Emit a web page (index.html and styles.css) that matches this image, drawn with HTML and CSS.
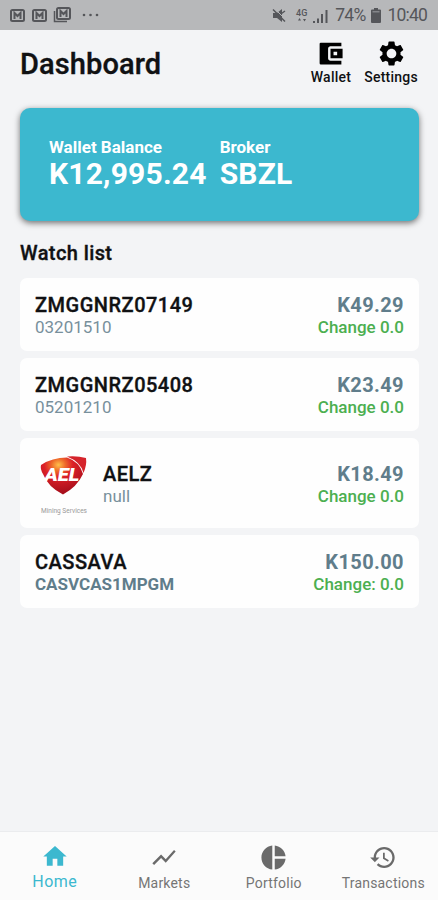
FILE: index.html
```html
<!DOCTYPE html>
<html lang="en">
<head>
    <meta charset="UTF-8">
    <meta name="viewport" content="width=device-width, initial-scale=1.0">
    <title>Dashboard</title>
    <link rel="stylesheet" href="styles.css">
</head>
<body>
    <div class="status-bar">
        <div class="status-left">
            <svg class="mail" width="15" height="13" viewBox="0 0 15 13"><rect x="1" y="1" width="13" height="11" rx="1.5"/><path d="M4.500 10V4l3 3 3-3v6"/></svg>
            <svg class="mail" width="15" height="13" viewBox="0 0 15 13"><rect x="1" y="1" width="13" height="11" rx="1.5"/><path d="M4.500 10V4l3 3 3-3v6"/></svg>
            <svg class="mail mail-stack" width="18" height="16" viewBox="0 0 18 16"><path class="thin" d="M1.500 4v10.500H14"/><rect x="4" y="1" width="13" height="11" rx="1.5"/><path d="M7.500 10V4l3 3 3-3v6"/></svg>
            <svg class="dots" width="17" height="4" viewBox="0 0 17 4"><circle cx="2" cy="2" r="1.3"/><circle cx="8.5" cy="2" r="1.3"/><circle cx="15" cy="2" r="1.3"/></svg>
        </div>
        <div class="status-right">
            <svg class="mute" width="15" height="15" viewBox="0 0 15 15"><path d="M1 5h4l5-4v13l-5-4H1z"/><path class="gap" d="M2 0l13 13"/><path class="slash" d="M1 1.500l12 12M9.500 5.500L13 3"/></svg>
            <div class="network"><span>4G</span><svg width="8" height="4" viewBox="0 0 8 4"><path d="M0 2.500h3L1.500 0zM5 1h3L6.500 3.500z"/></svg></div>
            <svg class="signal" width="15" height="14" viewBox="0 0 15 14"><path d="M0 12h2v2H0zM4 9.500h2V14H4zM8 5h2v9H8zM12.500 1h2v13h-2z"/></svg>
            <span class="percent">74%</span>
            <svg class="battery" width="10" height="15" viewBox="0 0 10 15"><path d="M3 0h4v1.500h2q1 0 1 1V14q0 1-1 1H1q-1 0-1-1V2.500q0-1 1-1h2z"/><path class="level" d="M1.500 3h7v1.500h-7z"/></svg>
            <span class="clock">10:40</span>
        </div>
    </div>

    <div class="header">
        <h1>Dashboard</h1>
        <div class="actions">
            <div class="action">
                <svg width="29" height="29" viewBox="0 0 24 24"><path fill-rule="evenodd" d="M21 18v3H4q-1 0-1-1V4q0-1 1-1h17v3h-9c-1.110 0-2 .9-2 2v8c0 1.100.89 2 2 2zm-9-2h10V8H12v8zm2.500-5.500h3v3h-3z"/></svg>
                <span>Wallet</span>
            </div>
            <div class="action">
                <svg width="29" height="29" viewBox="0 0 24 24"><path d="M19.430 12.980c.04-.32.07-.64.07-.98s-.03-.66-.07-.98l2.110-1.650c.19-.15.24-.42.12-.64l-2-3.460c-.12-.22-.39-.3-.61-.22l-2.490 1c-.52-.4-1.080-.73-1.690-.98l-.38-2.650C14.460 2.180 14.250 2 14 2h-4c-.25 0-.46.18-.49.42l-.38 2.650c-.61.25-1.170.59-1.690.98l-2.490-1c-.23-.09-.49 0-.61.22l-2 3.460c-.13.22-.07.49.12.64l2.110 1.650c-.04.32-.07.65-.07.98s.03.66.07.98l-2.110 1.650c-.19.15-.24.42-.12.64l2 3.460c.12.22.39.3.61.22l2.490-1c.52.4 1.080.73 1.690.98l.38 2.650c.03.24.24.42.49.42h4c.25 0 .46-.18.49-.42l.38-2.650c.61-.25 1.170-.59 1.690-.98l2.490 1c.23.09.49 0 .61-.22l2-3.460c.12-.22.07-.49-.12-.64l-2.110-1.650zM12 16c-2.210 0-4-1.790-4-4s1.790-4 4-4 4 1.790 4 4-1.790 4-4 4z"/></svg>
                <span>Settings</span>
            </div>
        </div>
    </div>

    <div class="balance-card">
        <div class="balance">
            <div class="caption">Wallet Balance</div>
            <div class="amount">K12,995.24</div>
        </div>
        <div class="broker">
            <div class="caption">Broker</div>
            <div class="amount">SBZL</div>
        </div>
    </div>

    <h2>Watch list</h2>
    <div class="watch-list">
        <div class="stock">
            <div>
                <div class="name">ZMGGNRZ07149</div>
                <div class="code">03201510</div>
            </div>
            <div class="quote">
                <div class="price">K49.29</div>
                <div class="change">Change 0.0</div>
            </div>
        </div>
        <div class="stock">
            <div>
                <div class="name">ZMGGNRZ05408</div>
                <div class="code">05201210</div>
            </div>
            <div class="quote">
                <div class="price">K23.49</div>
                <div class="change">Change 0.0</div>
            </div>
        </div>
        <div class="stock tall">
            <svg class="logo" width="58" height="62" viewBox="0 0 58 62">
                <defs>
                    <radialGradient id="glow" cx="0.42" cy="0.2" r="0.75">
                        <stop offset="0" stop-color="#ffc04a"/>
                        <stop offset="0.22" stop-color="#ee6a2a"/>
                        <stop offset="0.45" stop-color="#dc2027"/>
                        <stop offset="1" stop-color="#a80f1c"/>
                    </radialGradient>
                </defs>
                <path fill="url(#glow)" d="M6 12Q17 4.500 32 4.500Q45 9 48 21Q42 34 28 41.500Q13 34 8 21Q5 16 6 12z"/>
                <path fill="#d5232b" d="M32 3.500Q42 2.500 51 5Q52 12 48.500 20Q46 9 32 3.500z"/>
                <text class="logo-name" x="9.5" y="28" textLength="35" lengthAdjust="spacingAndGlyphs">AEL</text>
                <text class="logo-sub" x="6" y="60" textLength="46" lengthAdjust="spacingAndGlyphs">Mining Services</text>
            </svg>
            <div>
                <div class="name">AELZ</div>
                <div class="code">null</div>
            </div>
            <div class="quote">
                <div class="price">K18.49</div>
                <div class="change">Change 0.0</div>
            </div>
        </div>
        <div class="stock last">
            <div>
                <div class="name">CASSAVA</div>
                <div class="code strong">CASVCAS1MPGM</div>
            </div>
            <div class="quote">
                <div class="price">K150.00</div>
                <div class="change">Change: 0.0</div>
            </div>
        </div>
    </div>

    <div class="bottom-nav">
        <div class="tab active">
            <svg width="28" height="28" viewBox="0 0 24 24"><path d="M10 20v-6h4v6h5v-8h3L12 3 2 12h3v8z"/></svg>
            <span>Home</span>
        </div>
        <div class="tab">
            <svg width="28" height="28" viewBox="0 0 24 24"><path d="M3.500 18.490l6-6.010 4 4L22 6.920l-1.410-1.410-7.090 7.970-4-4L2 16.990z"/></svg>
            <span>Markets</span>
        </div>
        <div class="tab">
            <svg width="29" height="29" viewBox="0 0 24 24"><path d="M11 2v20c-5.070-.5-9-4.790-9-10s3.930-9.500 9-10zm2.030 0v8.990H22c-.47-4.740-4.240-8.520-8.970-8.990zm0 11.010V22c4.740-.47 8.500-4.250 8.970-8.990h-8.970z"/></svg>
            <span>Portfolio</span>
        </div>
        <div class="tab">
            <svg width="28" height="28" viewBox="0 0 24 24"><path d="M13 3c-4.970 0-9 4.030-9 9H1l3.890 3.890.07.14L9 12H6c0-3.870 3.130-7 7-7s7 3.130 7 7-3.130 7-7 7c-1.930 0-3.680-.79-4.940-2.060l-1.420 1.420C8.270 19.990 10.510 21 13 21c4.970 0 9-4.030 9-9s-4.030-9-9-9zm-1 5v5l4.280 2.540.72-1.210-3.500-2.080V8H12z"/></svg>
            <span>Transactions</span>
        </div>
    </div>
</body>
</html>
```
FILE: styles.css
```css
* {
    box-sizing: border-box;
}

body {
    font-family: Roboto, "Liberation Sans", sans-serif;
    background-color: #f3f4f6;
    color: #101113;
    margin: 0;
    height: 900px;
    display: flex;
    flex-direction: column;
    overflow: hidden;
}

svg {
    display: block;
    flex: none;
}

.status-bar {
    height: 30px;
    flex: none;
    background-color: #b7b8ba;
    color: #55565a;
    display: flex;
    justify-content: space-between;
    align-items: center;
    padding: 0 11px 0 10px;
}

.status-left,
.status-right {
    display: flex;
    align-items: center;
}

.mail {
    fill: none;
    stroke: #55565a;
    stroke-width: 2;
    margin-right: 7px;
}

.mail-stack {
    margin-left: -1px;
    margin-right: 11px;
}

.thin {
    stroke-width: 1.5;
}

.dots,
.mute,
.network svg,
.signal,
.battery {
    fill: #55565a;
}

.mute .gap {
    stroke: #b7b8ba;
    stroke-width: 1;
}

.mute .slash {
    stroke: #55565a;
    stroke-width: 1.5;
}

.network {
    display: flex;
    flex-direction: column;
    align-items: center;
    font-size: 9px;
    font-weight: 500;
    line-height: 9px;
    margin: 0 6px 0 9px;
}

.signal {
    margin-top: 2px;
}

.percent,
.clock {
    font-size: 17.5px;
    line-height: 22px;
    letter-spacing: -0.8px;
}

.percent {
    margin: 0 6px 0 7px;
}

.battery .level {
    fill: #85868a;
}

.clock {
    margin-left: 6px;
}

.header {
    height: 78px;
    flex: none;
    display: flex;
    justify-content: space-between;
    align-items: flex-start;
    padding: 9px 20px 0;
}

h1,
h2,
.name {
    font-weight: 500;
    -webkit-text-stroke: 0.35px #101113;
}

h1 {
    font-size: 29px;
    line-height: 36px;
    letter-spacing: 0.1px;
    margin: 7px 0 0;
}

.actions {
    display: flex;
    gap: 13px;
}

.action {
    display: flex;
    flex-direction: column;
    align-items: center;
    font-size: 14px;
    font-weight: 500;
    line-height: 16px;
    letter-spacing: 0.25px;
}

.action svg {
    fill: #000;
}

.action span {
    margin-top: 1px;
}

.balance-card {
    height: 113px;
    flex: none;
    margin: 0 19px 0 20px;
    padding: 29px 29px 0;
    background-color: #3cb8cf;
    border-radius: 10px;
    box-shadow: 0 2px 6px rgba(0, 0, 0, 0.55);
    color: #fff;
    display: flex;
    gap: 13px;
    font-weight: 700;
}

.caption {
    font-size: 17px;
    line-height: 20px;
}

.amount {
    font-size: 30px;
    line-height: 34px;
    letter-spacing: 0.2px;
}

h2 {
    font-size: 20px;
    line-height: 24px;
    letter-spacing: 0.4px;
    margin: 20px 20px 13px;
}

.watch-list {
    display: flex;
    flex-direction: column;
    gap: 7px;
    margin: 0 19px 0 20px;
}

.stock {
    height: 73px;
    background-color: #fefefe;
    border-radius: 7px;
    display: flex;
    align-items: center;
    padding: 0 15px;
}

.stock.tall {
    height: 90px;
    padding-top: 1px;
}

.stock.last {
    padding-top: 1px;
}

.logo {
    margin-right: 10px;
}

.logo-name {
    fill: #fff;
    font-size: 19px;
    font-weight: 900;
    font-style: italic;
}

.logo-sub {
    fill: #999;
    font-size: 7px;
}

.name,
.price {
    font-size: 20px;
    line-height: 24px;
    letter-spacing: 0.5px;
}

.code,
.change {
    font-size: 17px;
    line-height: 20px;
}

.code {
    color: #78909c;
}

.code.strong {
    color: #607d8b;
    font-weight: 700;
}

.quote {
    margin-left: auto;
    text-align: right;
}

.price {
    color: #607d8b;
    font-weight: 700;
    letter-spacing: 0.4px;
}

.change {
    color: #4caf50;
    font-weight: 500;
}

.bottom-nav {
    height: 69px;
    flex: none;
    margin-top: auto;
    background-color: #fbfbfb;
    border-top: 1px solid #ebecee;
    display: grid;
    grid-template-columns: repeat(4, 1fr);
}

.tab {
    display: flex;
    flex-direction: column;
    align-items: center;
    padding-top: 11px;
    color: #757575;
    fill: #6a6a6a;
    font-size: 14px;
    line-height: 22px;
    letter-spacing: 0.2px;
}

.tab svg {
    height: 29px;
}

.tab.active {
    padding-top: 10px;
    color: #3cb8cf;
    fill: #3cb8cf;
    font-size: 16px;
    letter-spacing: 0.5px;
}
```
